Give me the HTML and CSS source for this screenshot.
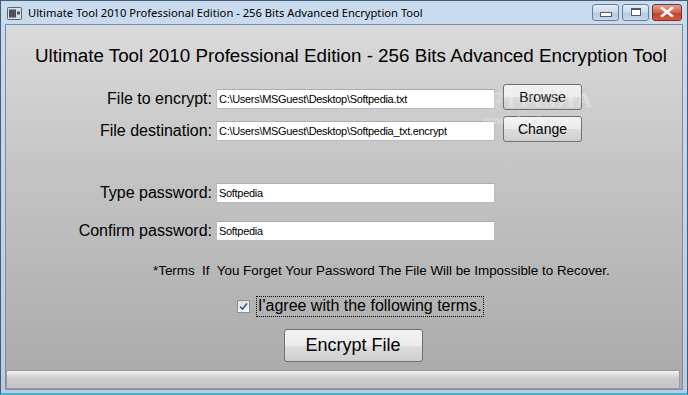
FILE: index.html
```html
<!DOCTYPE html>
<html lang="en">
<head>
<meta charset="UTF-8" />
<title>Ultimate Tool 2010 Professional Edition - 256 Bits Advanced Encryption Tool</title>
<link rel="stylesheet" href="styles.css">
</head>
<body>
<div class="window">
  <div class="titlebar">
    <svg class="app-icon" width="15" height="13" viewBox="0 0 15 13">
      <rect x="0.5" y="0.5" width="14" height="12" rx="1" fill="#d8dde4" stroke="#5a6470"/>
      <rect x="2" y="2.5" width="7" height="8" fill="#4a5260"/>
      <rect x="10" y="4.5" width="3" height="3" fill="#4a5260"/>
    </svg>
    <span class="title">Ultimate Tool 2010 Professional Edition - 256 Bits Advanced Encryption Tool</span>
    <div class="caption-btns">
      <div class="cap-btn"><span class="min-glyph"></span></div>
      <div class="cap-btn"><span class="max-glyph"></span></div>
      <div class="cap-btn close">
        <svg width="14" height="10" viewBox="0 0 14 10">
          <path d="M2 1 L12 9 M12 1 L2 9" stroke="#fff" stroke-width="2.6" stroke-linecap="square"/>
        </svg>
      </div>
    </div>
  </div>

  <div class="client">
    <h1>Ultimate Tool 2010 Professional Edition - 256 Bits Advanced Encryption Tool</h1>

    <div class="form">
      <label>File to encrypt:</label>
      <input type="text" value="C:\Users\MSGuest\Desktop\Softpedia.txt">
      <button class="small-btn">Browse</button>

      <label>File destination:</label>
      <input type="text" value="C:\Users\MSGuest\Desktop\Softpedia_txt.encrypt">
      <button class="small-btn">Change</button>
    </div>

    <div class="form pw">
      <label>Type password:</label>
      <input type="text" value="Softpedia">
      <span></span>

      <label>Confirm password:</label>
      <input type="text" value="Softpedia">
      <span></span>
    </div>

    <p class="terms">*Terms&nbsp; If&nbsp; You Forget Your Password The File Will be Impossible to Recover.</p>

    <div class="agree">
      <span class="check">
        <svg width="9" height="9" viewBox="0 0 9 9"><path d="M1 4.5 L3.5 7 L8 1.5" fill="none" stroke="#3c4f9c" stroke-width="1.6"/></svg>
      </span>
      <span class="agree-text">I'agree with the following terms.</span>
    </div>

    <div class="actions">
      <button class="big-btn">Encrypt File</button>
    </div>

    <div class="progress"></div>

    <div class="watermark">SOFTPEDIA<span>www.softpedia.com</span></div>
  </div>
</div>
</body>
</html>
```

FILE: styles.css
```css
body {
  margin: 0; padding: 0;
  background: #fff;
  font-family: "Liberation Sans", Arial, sans-serif;
}
.window {
  width: 688px; height: 395px;
  box-sizing: border-box;
  display: flex; flex-direction: column;
  background: linear-gradient(#c9dbef, #b7cde6);
  border: 1px solid #4b5c70;
  border-bottom: 2px solid #3ab7d8;
  padding: 0 4px 3px 4px;
  position: relative;
}
.titlebar {
  height: 23px;
  display: flex; align-items: center;
  flex-shrink: 0;
}
.app-icon { margin-left: 2px; margin-top: 1px; }
.title {
  margin-left: 6px;
  font-family: "Noto Sans", "Open Sans", sans-serif;
  font-size: 11.2px;
  color: #000;
  flex: 1;
  white-space: nowrap;
}
.caption-btns { display: flex; gap: 3px; margin-top: -1px; margin-right: 1px; }
.cap-btn {
  width: 25px; height: 15px;
  border: 1px solid #6c7e96;
  border-radius: 3px;
  background: linear-gradient(#e6eef8, #c9d8ea 50%, #b6c9e0 51%, #c8d8ec);
  display: flex; align-items: center; justify-content: center;
}
.cap-btn.close {
  width: 28px;
  border-color: #7a3028;
  background: linear-gradient(#e8a08f, #d0614c 50%, #c0402c 51%, #d25a44);
}
.min-glyph {
  width: 10px; height: 3px; margin-top: 4px;
  background: #fff; border: 1px solid #505a68;
}
.max-glyph {
  width: 8px; height: 5px;
  border: 1px solid #505a68;
  border-top-width: 2px;
  background: #fff;
}
.client {
  flex: 1;
  position: relative;
  border: 1px solid #7c8ea4;
  background: linear-gradient(#dadada, #c4c4c4 40%, #a9a9a9);
  display: flex; flex-direction: column;
  overflow: hidden;
}
h1 {
  margin: 20px 0 0 29px;
  font-size: 18.8px;
  font-weight: normal;
  color: #000;
  white-space: nowrap;
}
.form {
  display: grid;
  grid-template-columns: 206px 279px 86px;
  column-gap: 4px;
  row-gap: 9px;
  align-items: center;
  margin-top: 20px;
}
.form label {
  text-align: right;
  font-size: 16px;
  color: #000;
  white-space: nowrap;
}
.form input {
  height: 20px;
  box-sizing: border-box;
  border: 1px solid #b8bcc4;
  border-top-color: #a9adb5;
  background: #fff;
  padding: 0 2px;
  font-family: "Liberation Sans", Arial, sans-serif;
  font-size: 11px;
  letter-spacing: -0.3px;
  color: #000;
  outline: none;
}
.small-btn {
  width: 79px; height: 26px;
  margin-left: 4px;
  margin-top: -3px;
  border: 1px solid #707070;
  border-radius: 3px;
  background: linear-gradient(#f2f2f2, #ebebeb 50%, #dddddd 51%, #cfcfcf);
  font-family: "Liberation Sans", Arial, sans-serif;
  font-size: 14px;
  color: #000;
  padding: 0;
}
.pw { margin-top: 41px; row-gap: 18px; }
.terms {
  margin: 22px 0 0 147px;
  font-size: 13.4px;
  color: #000;
  white-space: nowrap;
}
.agree {
  display: flex; align-items: center;
  margin: 18px 0 0 231px;
}
.check {
  width: 11px; height: 11px;
  border: 1px solid #8e8f8f;
  background: linear-gradient(#e0e0e0, #f8f8f8);
  display: flex; align-items: center; justify-content: center;
}
.agree-text {
  margin-left: 6px;
  font-size: 16px;
  color: #000;
  border: 1px dotted #000;
  padding: 0 1px 1px 1px;
}
.actions { display: flex; justify-content: center; margin-top: 12px; padding-left: 18px; }
.big-btn {
  width: 139px; height: 33px;
  border: 1px solid #707070;
  border-radius: 3px;
  background: linear-gradient(#f2f2f2, #ebebeb 50%, #dddddd 51%, #cfcfcf);
  font-family: "Liberation Sans", Arial, sans-serif;
  font-size: 18px;
  color: #000;
  padding: 0;
}
.progress {
  margin-top: auto;
  height: 17px;
  margin-right: 2px;
  border: 1px solid #9a9a9a;
  border-radius: 2px;
  background: linear-gradient(#f4f4f4, #e0e0e0 20%, #cdcdcd 45%, #c4c4c4 100%);
}
.watermark {
  position: absolute;
  left: 452px; top: 62px;
  font-family: "Liberation Serif", serif;
  font-size: 22px;
  font-weight: bold;
  color: rgba(255,255,255,0.3);
  letter-spacing: 1px;
  display: flex; flex-direction: column; align-items: center;
  pointer-events: none;
}
.watermark span {
  font-family: "Liberation Sans", sans-serif;
  font-size: 10px; font-weight: normal;
  letter-spacing: 0;
  color: rgba(255,255,255,0.4);
  margin-top: 2px;
}
```
